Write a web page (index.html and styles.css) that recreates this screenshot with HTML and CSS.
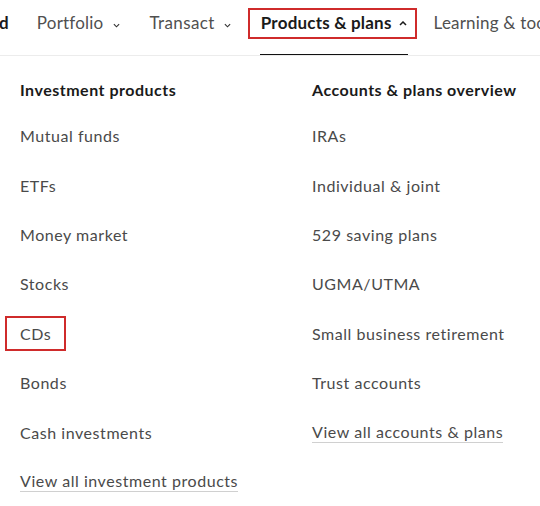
FILE: index.html
```html
<!DOCTYPE html>
<html>
<head>
<meta charset="utf-8">
<link rel="stylesheet" href="styles.css">
</head>
<body>
<nav class="topnav">
  <span class="nav-item nav-cut">d</span>
  <span class="nav-item nav-portfolio">Portfolio <svg class="chev" viewBox="0 0 8 5"><path d="M1 1l3 3 3-3"/></svg></span>
  <span class="nav-item nav-transact">Transact <svg class="chev" viewBox="0 0 8 5"><path d="M1 1l3 3 3-3"/></svg></span>
  <span class="nav-item active">Products &amp; plans <svg class="chev" viewBox="0 0 8 5"><path d="M1 4l3-3 3 3"/></svg></span>
  <span class="nav-item">Learning &amp; tools</span>
</nav>
<div class="menu">
  <div class="col">
    <div class="col-head">Investment products</div>
    <div class="item"><span>Mutual funds</span></div>
    <div class="item"><span>ETFs</span></div>
    <div class="item"><span>Money market</span></div>
    <div class="item"><span>Stocks</span></div>
    <div class="item"><span class="marked">CDs</span></div>
    <div class="item"><span>Bonds</span></div>
    <div class="item"><span>Cash investments</span></div>
    <div class="item"><span class="view-all">View all investment products</span></div>
  </div>
  <div class="col">
    <div class="col-head">Accounts &amp; plans overview</div>
    <div class="item"><span>IRAs</span></div>
    <div class="item"><span>Individual &amp; joint</span></div>
    <div class="item"><span>529 saving plans</span></div>
    <div class="item"><span>UGMA/UTMA</span></div>
    <div class="item"><span>Small business retirement</span></div>
    <div class="item"><span>Trust accounts</span></div>
    <div class="item"><span class="view-all">View all accounts &amp; plans</span></div>
  </div>
</div>
</body>
</html>
```
FILE: styles.css
```css
html, body {
  margin: 0;
  padding: 0;
  background: #fff;
}
body {
  font-family: Lato, "Open Sans", sans-serif;
  color: #333;
  overflow: hidden;
  width: 540px;
  height: 506px;
}
.topnav {
  display: flex;
  align-items: flex-start;
  height: 56px;
  border-bottom: 1px solid #ececec;
  white-space: nowrap;
  font-size: 17px;
  line-height: 22px;
  color: #505050;
  box-sizing: border-box;
  overflow: hidden;
}
.nav-item {
  display: flex;
  align-items: center;
  gap: 10px;
  padding-top: 12px;
  position: relative;
  letter-spacing: 0.2px;
}
.nav-cut {
  font-weight: 700;
  color: #1a1a1a;
  margin-left: -1px;
  margin-right: 28px;
}
.nav-portfolio {
  margin-right: 29px;
}
.nav-transact {
  gap: 9px;
  letter-spacing: 0.4px;
  margin-right: 17px;
}
.chev {
  width: 7px;
  height: 5px;
  fill: none;
  stroke: #333;
  stroke-width: 1.3;
  margin-top: 4px;
}
.active {
  font-weight: 700;
  color: #1a1a1a;
  padding: 12px 10px 0 13px;
  gap: 7px;
  margin-right: 17px;
}
.active .chev {
  width: 8px;
  stroke: #1a1a1a;
  stroke-width: 1.5;
  margin-top: 1px;
}
.active::before {
  content: "";
  position: absolute;
  left: 0;
  right: 0;
  top: 8px;
  height: 31px;
  border: 2px solid #cf2b2b;
  box-sizing: border-box;
}
.active::after {
  content: "";
  position: absolute;
  left: 12px;
  right: 9px;
  top: 54px;
  height: 4px;
  background: #111;
}
.menu {
  display: grid;
  grid-template-columns: 292px 1fr;
  padding: 22px 0 0 20px;
}
.col-head {
  font-weight: 700;
  font-size: 16px;
  line-height: 24px;
  letter-spacing: 0.5px;
  color: #1a1a1a;
  margin-bottom: 9px;
}
.item {
  height: 49.4px;
  display: flex;
  align-items: center;
  font-size: 16px;
  letter-spacing: 0.55px;
  color: #4a4a4a;
}
.marked {
  position: relative;
}
.marked::after {
  content: "";
  position: absolute;
  left: -15px;
  right: -15px;
  top: -8px;
  bottom: -8px;
  border: 2px solid #cf2b2b;
}
.view-all {
  border-bottom: 1px solid #d0d0d0;
  padding-bottom: 1px;
}
```
